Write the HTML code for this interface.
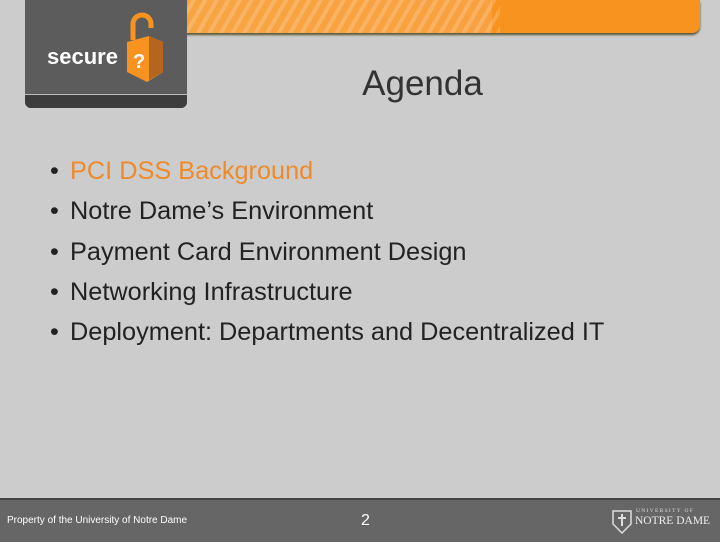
<html><head><style>
body{margin:0;width:720px;height:540px;background:#cccccc;position:relative;overflow:hidden;font-family:"Liberation Sans",sans-serif}
.bar{position:absolute;left:180px;top:0;width:520px;height:33px;border-radius:0 0 8px 0;background:linear-gradient(90deg,#f7a542 0%,#f9a040 60%,#f7931e 60%,#f7931e 100%);box-shadow:0 2px 2px #553;}
.stripes{position:absolute;left:180px;top:0;width:320px;height:33px;background:repeating-linear-gradient(120deg,rgba(255,255,255,.18) 0 4px,rgba(255,255,255,0) 4px 10px);}
.logo{position:absolute;left:25px;top:0;width:162px;height:108px;background:#5c5c5c;border-radius:0 0 6px 6px;overflow:hidden}
.logo .bot{position:absolute;left:0;top:94px;width:162px;height:14px;background:#3c3c3c;border-top:1px solid #bbb}
.logo .t{position:absolute;left:22px;top:44px;color:#fff;font-weight:bold;font-size:22px}
h1{position:absolute;left:0;width:845px;text-align:center;top:64px;margin:0;font-weight:normal;font-size:35px;color:#333}
ul{position:absolute;left:50px;top:155px;margin:0;padding:0;list-style:none}
li{font-size:25.3px;color:#222;height:40.3px;line-height:32px;white-space:nowrap}
li:before{content:"•";display:inline-block;width:20px;color:#222}
li.o{color:#ef8a2a}
.foot{position:absolute;left:0;top:498px;width:720px;height:42px;background:#666;border-top:2px solid #444}
</style></head><body>
<div class="bar"></div><div class="stripes"></div>
<div class="logo"><div class="t">secure</div>
<svg style="position:absolute;left:98px;top:10px" width="46" height="75" viewBox="0 0 46 75"><path d="M10 30 V14 a9 9 0 0 1 18 0 V18" fill="none" stroke="#f7931e" stroke-width="5"/><path d="M4 32 L26 26 L40 32 L40 62 L24 72 L4 62Z" fill="#f7931e"/><path d="M26 26 L40 32 L40 62 L26 70Z" fill="#b5651d"/><text x="10" y="58" fill="#fff" font-size="20" font-weight="bold" font-family="Liberation Sans">?</text></svg>
<div class="bot"></div></div>
<h1>Agenda</h1>
<ul><li class="o">PCI DSS Background</li><li>Notre Dame’s Environment</li><li>Payment Card Environment Design</li><li>Networking Infrastructure</li><li>Deployment: Departments and Decentralized IT</li></ul>
<div class="foot">
<div style="position:absolute;left:7px;top:15px;color:#fff;font-size:10px">Property of the University of Notre Dame</div>
<div style="position:absolute;left:361px;top:12px;color:#fff;font-size:16px">2</div>
<svg style="position:absolute;left:612px;top:10px" width="20" height="24"><path d="M1 1H19V14L10 23L1 14Z" fill="none" stroke="#ddd" stroke-width="1.5"/><path d="M10 4V16M6 8H14" stroke="#ddd" stroke-width="2"/></svg>
<div style="position:absolute;left:636px;top:8px;color:#ddd;font-size:5.5px;letter-spacing:1.3px;font-family:'Liberation Serif',serif">UNIVERSITY OF</div>
<div style="position:absolute;left:635px;top:15px;color:#eee;font-size:11.5px;font-family:'Liberation Serif',serif">NOTRE DAME</div>
</div>
</body></html>
